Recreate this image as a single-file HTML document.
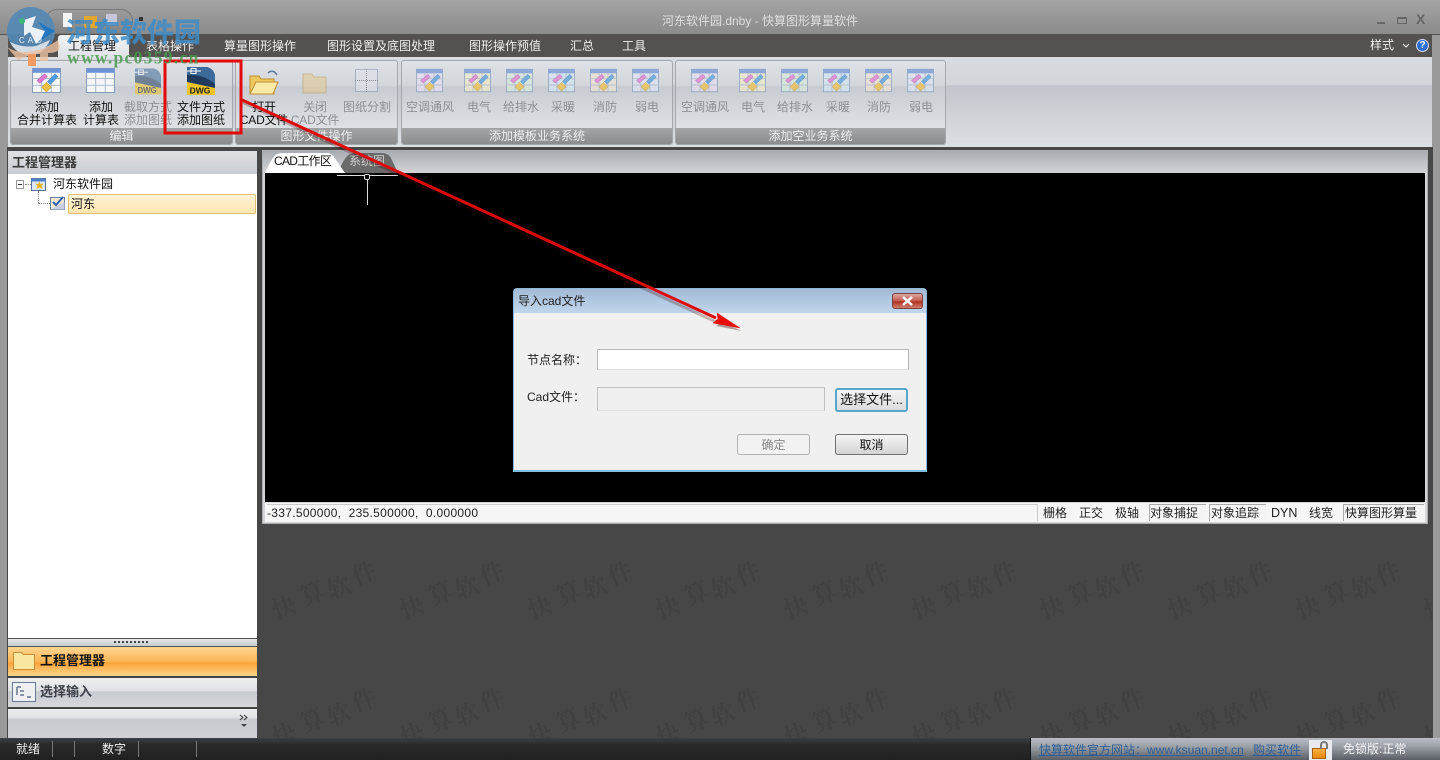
<!DOCTYPE html>
<html lang="zh"><head><meta charset="utf-8"><title>河东软件园.dnby - 快算图形算量软件</title>
<style>
*{box-sizing:border-box}
html,body{margin:0;padding:0;width:1440px;height:760px;overflow:hidden;background:#474747}
body{position:relative;font:12px "Liberation Sans","Noto Sans CJK SC",sans-serif;color:#000}
.a{position:absolute}
.t{position:absolute;white-space:nowrap;line-height:14px}
.c{text-align:center}
.m{position:absolute;top:39px;color:#eee;font-size:12px;line-height:15px;white-space:nowrap}
.g{position:absolute;top:60px;height:85px;border:1px solid #a4a8ad;border-radius:3px;background:linear-gradient(#dfe2e6 0,#d2d5da 30%,#c8ccd2 31%,#dfe3e6 85%,#e6e8ea 100%);overflow:hidden}
.g b{position:absolute;left:0;right:0;bottom:0;height:16px;background:linear-gradient(#a3a5a7,#8a8c8e);color:#eee;font-weight:normal;text-align:center;line-height:16px;font-size:12px}
.lb{position:absolute;font-size:12px;line-height:13px;text-align:center;white-space:nowrap;color:#111}
.d{color:#8d9095}
svg.i{position:absolute;overflow:visible}
.st{position:absolute;top:506px;font-size:12px;line-height:15px;white-space:nowrap;color:#222}
.box{position:absolute;top:504px;height:17px;border-left:1px solid #aaa;border-top:1px solid #aaa;background:#f4f4f4}
</style></head><body>
<svg width="0" height="0" style="position:absolute"><defs>
<symbol id="tb" viewBox="0 0 30 26"><rect x=".5" y=".5" width="29" height="25" fill="#f4f6f8" stroke="#8296b4"/><rect x=".5" y=".5" width="29" height="4.5" fill="#6d93d6"/><path d="M.5 11h29M.5 18h29M10 5v20M20 5v20" stroke="#a9b7c9" fill="none"/></symbol>
<symbol id="tc" viewBox="0 0 30 26"><rect x=".5" y=".5" width="29" height="25" fill="currentColor" stroke="#8296b4"/><rect x=".5" y=".5" width="29" height="4.5" fill="#6d93d6"/><path d="M.5 11h29M.5 18h29M10 5v20M20 5v20" stroke="#a9b7c9" fill="none"/><path d="M5 13l8-7 3 3-8 7z" fill="#e078d0" stroke="#a050a0" stroke-width=".5"/><path d="M16 14l8-8 3 3-8 8z" fill="#4d9be0" stroke="#3070a0" stroke-width=".5"/><path d="M10 20l5-5 5 5-5 5z" fill="#f0c040" stroke="#b08820" stroke-width=".5"/></symbol>
<symbol id="dw" viewBox="0 0 28 28"><path d="M0 0h20q7 2 8 9v19H0z" fill="#1f3a5c"/><path d="M0 8c10-1 20 2 28 9V9q-1-7-8-9H0z" fill="#3d6a98"/><path d="M0 4h14" stroke="#fff"/><rect x="4" y="1.500" width="5" height="5" fill="none" stroke="#fff"/><path d="M0 15l28 6v7H0z" fill="#ecc42a"/><text x="13" y="26.500" text-anchor="middle" font-family="Liberation Sans" font-size="8.500" font-weight="bold" fill="#222">DWG</text></symbol>
<pattern id="wm" x="0" y="0" width="128" height="127" patternUnits="userSpaceOnUse">
<g font-family="Noto Serif CJK SC,serif" font-size="24" font-weight="bold" fill="#414141" text-anchor="middle">
<text x="28" y="108" transform="rotate(-20 28 99)">快</text><text x="56" y="94" transform="rotate(-20 56 85)">算</text><text x="83" y="88" transform="rotate(-20 83 79)">软</text><text x="108" y="74" transform="rotate(-20 108 65)">件</text></g></pattern>
</defs></svg>

<!-- chrome -->
<div class="a" style="left:0;top:0;width:1440px;height:35px;background:linear-gradient(#a4a4a5,#8b8b8b)"></div>
<div class="a" style="left:0;top:34px;width:1440px;height:23px;background:#535251"></div>
<div class="a" style="left:0;top:57px;width:1440px;height:91px;background:linear-gradient(#d9dce0,#d2d5da 30%,#c2c6cc 32%,#d8dbdf 90%,#dfe1e3)"></div>
<div class="a" style="left:0;top:35px;width:8px;height:725px;background:#9a9a9a"></div>
<div class="a" style="left:1432px;top:35px;width:8px;height:725px;background:#9a9a9a"></div>
<div class="a" style="left:7px;top:147px;width:1426px;height:592px;background:#474747"></div>
<svg class="a" style="left:258px;top:526px" width="1174" height="212"><g transform="translate(-258 -526)"><rect x="258" y="526" width="1174" height="212" fill="url(#wm)"/></g></svg>

<div class="t" style="left:662px;top:14px;color:#dedede;font-size:12px">河东软件园.dnby - 快算图形算量软件</div>
<div class="a" style="left:1377px;top:22px;width:8px;height:2px;background:#666"></div>
<div class="a" style="left:1397px;top:17px;width:10px;height:7px;border:1px solid #666;border-top-width:2px"></div>
<div class="t" style="left:1416px;top:12px;font-size:14px;font-weight:bold;color:#666">X</div>

<!-- quick access -->
<div class="a" style="left:45px;top:9px;width:88px;height:25px;border-radius:12px;background:linear-gradient(#9c9c9c,#858585);border:1px solid #777"></div>
<div class="a" style="left:63px;top:13px;width:9px;height:14px;background:#f4f4f4"></div>
<div class="a" style="left:84px;top:16px;width:13px;height:12px;background:#e0a830"></div>
<div class="a" style="left:106px;top:14px;width:11px;height:11px;background:#c6c6d8"></div>
<div class="a" style="left:139px;top:17px;width:4px;height:4px;background:#333"></div>
<!-- tabs -->
<div class="a" style="left:58px;top:35px;width:71px;height:23px;background:linear-gradient(#f0f1f2,#dfe2e6);border-radius:3px 3px 0 0"></div>
<div class="m" style="left:68px;color:#111">工程管理</div>
<div class="m" style="left:146px">表格操作</div>
<div class="m" style="left:224px">算量图形操作</div>
<div class="m" style="left:327px">图形设置及底图处理</div>
<div class="m" style="left:469px">图形操作预值</div>
<div class="m" style="left:570px">汇总</div>
<div class="m" style="left:622px">工具</div>
<div class="t" style="left:1370px;top:38px;color:#eee">样式</div>
<svg class="i" style="left:1402px;top:43px" width="8" height="5"><path d="M1 1l3 3 3-3" stroke="#eee" fill="none"/></svg>
<div class="a" style="left:1416px;top:39px;width:13px;height:13px;border-radius:50%;background:#2d6fd0;border:1px solid #dde;color:#fff;font:bold 10px/11px 'Liberation Sans';text-align:center">?</div>

<!-- ribbon -->
<div class="g" style="left:10px;width:223px"><b>编辑</b></div>
<div class="g" style="left:235px;width:163px"><b>图形文件操作</b></div>
<div class="g" style="left:401px;width:272px"><b>添加模板业务系统</b></div>
<div class="g" style="left:675px;width:271px"><b>添加空业务系统</b></div>

<svg class="i" style="left:32px;top:68px;color:#f4f6f8" width="29" height="25"><use href="#tc"/></svg>
<svg class="i" style="left:86px;top:68px" width="29" height="25"><use href="#tb"/></svg>
<svg class="i" style="left:135px;top:68px;opacity:.55" width="26" height="27"><use href="#dw"/></svg>
<svg class="i" style="left:187px;top:67px" width="28" height="28"><use href="#dw"/></svg>
<div class="lb" style="left:12px;width:70px;top:101px">添加<br>合并计算表</div>
<div class="lb" style="left:76px;width:50px;top:101px">添加<br>计算表</div>
<div class="lb d" style="left:122px;width:52px;top:101px">截取方式<br>添加图纸</div>
<div class="lb" style="left:175px;width:52px;top:101px">文件方式<br>添加图纸</div>

<svg class="i" style="left:248px;top:68px" width="32" height="28"><path d="M2 26V8h9l2 3h13v15z" fill="#f0c860" stroke="#c09030"/><path d="M2 26l6-12h22l-5 12z" fill="#fbe9a8" stroke="#c09030"/><path d="M20 5c3-3 7-2 9 2" stroke="#5a7aa0" stroke-width="1.5" fill="none"/></svg>
<svg class="i" style="left:302px;top:69px;opacity:.45" width="28" height="26"><path d="M1 24V5h9l2 3h12v16z" fill="#e8c880" stroke="#b09040"/></svg>
<svg class="i" style="left:355px;top:69px;opacity:.6" width="23" height="23"><rect x=".5" y=".5" width="22" height="22" fill="#dfe3ea" stroke="#8a9ab0"/><path d="M11.5 0v23M0 11.5h23" stroke="#556" stroke-dasharray="1 1"/></svg>
<div class="lb" style="left:238px;width:52px;top:101px;letter-spacing:-.2px">打开<br>CAD文件</div>
<div class="lb d" style="left:290px;width:50px;top:101px;letter-spacing:-.2px">关闭<br>CAD文件</div>
<div class="lb d" style="left:340px;width:54px;top:101px">图纸分割</div>

<svg class="i" style="left:416px;top:68px;opacity:.7;color:#e6dff2" width="27" height="25"><use href="#tc"/></svg>
<svg class="i" style="left:464px;top:68px;opacity:.7;color:#f0eccc" width="27" height="25"><use href="#tc"/></svg>
<svg class="i" style="left:506px;top:68px;opacity:.7;color:#d8ecdc" width="27" height="25"><use href="#tc"/></svg>
<svg class="i" style="left:548px;top:68px;opacity:.7;color:#d4e8f4" width="27" height="25"><use href="#tc"/></svg>
<svg class="i" style="left:590px;top:68px;opacity:.7;color:#f0e4d4" width="27" height="25"><use href="#tc"/></svg>
<svg class="i" style="left:632px;top:68px;opacity:.7;color:#dfe4f4" width="27" height="25"><use href="#tc"/></svg>
<div class="lb d" style="left:405px;width:50px;top:101px">空调通风</div>
<div class="lb d" style="left:459px;width:40px;top:101px">电气</div>
<div class="lb d" style="left:500px;width:42px;top:101px">给排水</div>
<div class="lb d" style="left:542px;width:42px;top:101px">采暖</div>
<div class="lb d" style="left:584px;width:42px;top:101px">消防</div>
<div class="lb d" style="left:626px;width:42px;top:101px">弱电</div>

<svg class="i" style="left:691px;top:68px;opacity:.7;color:#e6dff2" width="27" height="25"><use href="#tc"/></svg>
<svg class="i" style="left:739px;top:68px;opacity:.7;color:#f0eccc" width="27" height="25"><use href="#tc"/></svg>
<svg class="i" style="left:781px;top:68px;opacity:.7;color:#d8ecdc" width="27" height="25"><use href="#tc"/></svg>
<svg class="i" style="left:823px;top:68px;opacity:.7;color:#d4e8f4" width="27" height="25"><use href="#tc"/></svg>
<svg class="i" style="left:865px;top:68px;opacity:.7;color:#f0e4d4" width="27" height="25"><use href="#tc"/></svg>
<svg class="i" style="left:907px;top:68px;opacity:.7;color:#dfe4f4" width="27" height="25"><use href="#tc"/></svg>
<div class="lb d" style="left:680px;width:50px;top:101px">空调通风</div>
<div class="lb d" style="left:733px;width:40px;top:101px">电气</div>
<div class="lb d" style="left:774px;width:42px;top:101px">给排水</div>
<div class="lb d" style="left:817px;width:42px;top:101px">采暖</div>
<div class="lb d" style="left:858px;width:42px;top:101px">消防</div>
<div class="lb d" style="left:900px;width:42px;top:101px">弱电</div>

<!-- left panel -->
<div class="a" style="left:8px;top:151px;width:249px;height:587px;background:#fff"></div>
<div class="a" style="left:8px;top:151px;width:249px;height:23px;background:linear-gradient(#dfe1e4,#c9ccd1)"></div>
<div class="t" style="left:12px;top:156px;font-weight:bold;font-size:13px;color:#3a3a3a">工程管理器</div>
<div class="a" style="left:16px;top:180px;width:8px;height:9px;border:1px solid #999;background:#fff"></div>
<div class="a" style="left:18px;top:184px;width:4px;height:1px;background:#333"></div>
<div class="a" style="left:25px;top:184px;width:6px;border-top:1px dotted #888"></div>
<svg class="i" style="left:31px;top:178px" width="15" height="13"><rect x=".5" y=".5" width="14" height="12" fill="#dce8f6" stroke="#5a7098"/><rect x=".5" y=".5" width="14" height="3" fill="#4d80c8"/><path d="M8 3l1.500 3 3-.5-2 2.500 1 3-3-1.500-3 1.500 1-3-2-2.500 3 .5z" fill="#e8b020"/></svg>
<div class="t" style="left:53px;top:177px;color:#111">河东软件园</div>
<div class="a" style="left:38px;top:191px;height:12px;border-left:1px dotted #888"></div>
<div class="a" style="left:38px;top:203px;width:12px;border-top:1px dotted #888"></div>
<svg class="i" style="left:50px;top:196px" width="15" height="14"><rect x=".5" y="1.500" width="14" height="12" fill="#f2ead0" stroke="#6a7fa0"/><path d="M.5 13.500L14.500 6v7.500z" fill="#c8cfe4"/><path d="M3 6l3 3 7-8" stroke="#3060b0" stroke-width="2" fill="none"/></svg>
<div class="a" style="left:68px;top:194px;width:188px;height:20px;background:linear-gradient(#fff4d8,#fde6b0);border:1px solid #e0c070;border-radius:2px"></div>
<div class="t" style="left:71px;top:197px;color:#111">河东</div>

<div class="a" style="left:8px;top:638px;width:249px;height:9px;background:linear-gradient(#e6e8eb,#c8cbd0);border-top:1px solid #555;border-bottom:1px solid #555"></div>
<div class="a" style="left:114px;top:641px;width:34px;border-top:2px dotted #444"></div>
<div class="a" style="left:8px;top:647px;width:249px;height:29px;background:linear-gradient(#fed692,#fdb655 50%,#fba43a 55%,#fed68a)"></div>
<svg class="i" style="left:13px;top:651px" width="22" height="19"><path d="M.5 18.500V1.500h8l1.500 2h11.500v15z" fill="#fbe8a0" stroke="#c89038"/></svg>
<div class="t" style="left:40px;top:654px;font-weight:bold;font-size:13px;color:#111">工程管理器</div>
<div class="a" style="left:8px;top:676px;width:249px;height:2px;background:#444"></div>
<div class="a" style="left:8px;top:678px;width:249px;height:29px;background:linear-gradient(#eff0f2,#dfe1e4 45%,#c7cad0 47%,#d6d8dc)"></div>
<svg class="i" style="left:12px;top:682px" width="24" height="20"><rect x=".5" y=".5" width="23" height="19" fill="#eef0f4" stroke="#6a7a90"/><path d="M5 5h4M8 9h4M8 13h4M15 15h4M5 5v8" stroke="#8a94a4" stroke-width="2" fill="none"/></svg>
<div class="t" style="left:40px;top:685px;font-weight:bold;font-size:13px;color:#3c4048">选择输入</div>
<div class="a" style="left:8px;top:707px;width:249px;height:2px;background:#444"></div>
<div class="a" style="left:8px;top:709px;width:249px;height:29px;background:linear-gradient(#eceef0,#dfe1e4 30%,#c7cad0 35%,#cfd1d5)"></div>
<svg class="i" style="left:239px;top:714px" width="10" height="14"><path d="M1 1l3 2.500-3 2.500M5 1l3 2.500-3 2.500" stroke="#333" fill="none"/><path d="M2 10h6l-3 3z" fill="#444"/></svg>

<!-- work area -->
<div class="a" style="left:262px;top:150px;width:1166px;height:374px;background:linear-gradient(#a8abb0 0,#d3d5d8 22px);border:1px solid #b0b0b0"></div>
<svg class="a" style="left:262px;top:151px" width="150" height="24"><path d="M76 22Q82 6 88 3Q91 2 94 2h26q6 0 9 5l7 15z" fill="#6a6a6a"/><path d="M3 22Q10 6 15 3Q18 2 22 2h44q3 0 6 4l11 16z" fill="#fff"/></svg>
<div class="t" style="left:274px;top:154px;color:#111;letter-spacing:-.7px">CAD工作区</div>
<div class="t" style="left:349px;top:154px;color:#d0d0d0">系统图</div>
<div class="a" style="left:265px;top:173px;width:1160px;height:329px;background:#000"></div>
<div class="a" style="left:337px;top:175px;width:61px;height:1px;background:#ddd"></div>
<div class="a" style="left:367px;top:176px;width:1px;height:29px;background:#ddd"></div>
<div class="a" style="left:364px;top:174px;width:6px;height:6px;border:1px solid #ddd;background:#000;border-radius:2px"></div>
<div class="a" style="left:265px;top:503px;width:1160px;height:19px;background:#f6f6f6"></div>
<div class="t" style="left:267px;top:506px;color:#222;font-size:12px;letter-spacing:.3px">-337.500000,&nbsp; 235.500000,&nbsp; 0.000000</div>
<div class="a" style="left:267px;top:504px;width:770px;height:1px;background:#ccc"></div>
<div class="a" style="left:1037px;top:504px;width:1px;height:17px;background:#ccc"></div>
<div class="st" style="left:1043px">栅格</div>
<div class="st" style="left:1079px">正交</div>
<div class="st" style="left:1115px">极轴</div>
<div class="box" style="left:1149px;width:57px"></div><div class="st" style="left:1150px">对象捕捉</div>
<div class="box" style="left:1209px;width:57px"></div><div class="st" style="left:1211px">对象追踪</div>
<div class="st" style="left:1271px;font-size:12.500px">DYN</div>
<div class="st" style="left:1309px">线宽</div>
<div class="box" style="left:1343px;width:81px"></div><div class="st" style="left:1345px">快算图形算量</div>

<!-- status bar -->
<div class="a" style="left:0;top:738px;width:1440px;height:22px;background:linear-gradient(#3b4048,#2a2a2a 30%,#202020)"></div>
<div class="t" style="left:16px;top:742px;color:#eee">就绪</div>
<div class="t" style="left:102px;top:742px;color:#eee">数字</div>
<div class="a" style="left:52px;top:741px;width:1px;height:16px;background:#777"></div>
<div class="a" style="left:74px;top:741px;width:1px;height:16px;background:#777"></div>
<div class="a" style="left:138px;top:741px;width:1px;height:16px;background:#777"></div>
<div class="a" style="left:196px;top:741px;width:1px;height:16px;background:#777"></div>
<div class="a" style="left:1030px;top:738px;width:410px;height:22px;background:linear-gradient(#b9bdc3,#9fa4ab 35%,#5a5f66);border-left:1px solid #111"></div>
<div class="t" style="left:1039px;top:743px;color:#2f5f96;text-decoration:underline">快算软件官方网站：www.ksuan.net.cn</div>
<div class="t" style="left:1253px;top:743px;color:#2f5f96;text-decoration:underline">购买软件</div>
<div class="a" style="left:1309px;top:740px;width:23px;height:20px;background:#e8eaee"></div>
<div class="a" style="left:1312px;top:748px;width:14px;height:11px;background:linear-gradient(#f8b040,#e88a10);border:1px solid #a86010"></div>
<div class="a" style="left:1320px;top:741px;width:8px;height:8px;border:2px solid #777;border-bottom:0;border-radius:4px 4px 0 0"></div>
<div class="t" style="left:1343px;top:742px;color:#f4f4f4">免锁版:正常</div>

<!-- dialog -->
<div class="a" style="left:513px;top:288px;width:414px;height:184px;background:#f0f0f0;border:1px solid #8fb8d6;border-bottom:2px solid #7fc0e0;border-radius:4px 4px 0 0;overflow:hidden">
<div style="height:24px;background:linear-gradient(#a2bad6,#c0d6ec)"></div></div>
<div class="t" style="left:518px;top:294px;color:#222">导入cad文件</div>
<div class="a" style="left:892px;top:293px;width:31px;height:16px;border:1px solid #7a4040;border-radius:3px;background:linear-gradient(#dca8a0,#c45a4e 50%,#b03020 55%,#d08070)"></div>
<svg class="i" style="left:901px;top:296px" width="13" height="10"><path d="M2 1l9 8M11 1l-9 8" stroke="#fff" stroke-width="2.500"/></svg>
<div class="t" style="left:527px;top:353px;color:#222">节点名称：</div>
<div class="a" style="left:597px;top:349px;width:312px;height:21px;background:#fff;border:1px solid #b8b8b8;border-bottom-color:#e2e2e2"></div>
<div class="t" style="left:527px;top:390px;color:#222">Cad文件：</div>
<div class="a" style="left:597px;top:387px;width:228px;height:24px;background:#efefef;border:1px solid #c0c0c0;border-bottom-color:#e0e0e0"></div>
<div class="a c" style="left:835px;top:388px;width:73px;height:24px;border:2px solid #55a6c8;border-radius:3px;background:linear-gradient(#f4f4f4,#dcdcdc);line-height:20px;color:#111;font-size:13px;white-space:nowrap">选择文件...</div>
<div class="a c" style="left:737px;top:434px;width:73px;height:21px;border:1px solid #b0b0b0;border-radius:3px;background:#f2f2f2;line-height:20px;color:#888">确定</div>
<div class="a c" style="left:835px;top:434px;width:73px;height:21px;border:1px solid #707070;border-radius:3px;background:linear-gradient(#f4f4f4,#d4d4d4);line-height:20px;color:#111">取消</div>

<!-- annotations -->
<svg class="a" style="left:0;top:0;pointer-events:none" width="1440" height="760">
<path d="M242 102L716 322" stroke="#3a0000" stroke-opacity=".25" stroke-width="3" fill="none"/>
<path d="M742 331L716 326L722 322z" fill="#3a0000" fill-opacity=".35"/>
<path d="M240 99L716 318" stroke="#dd0a0a" stroke-width="3" fill="none"/>
<path d="M740 328L717 313L718 319L713 323z" fill="#e80a0a" stroke="#d00" stroke-width=".5"/>
<rect x="165" y="61" width="76" height="72" fill="none" stroke="#e20a0a" stroke-width="3"/>
<!-- logo watermark -->
<circle cx="31" cy="31" r="24" fill="#5588b4" fill-opacity=".92"/>
<path d="M10 42Q22 48 36 46L50 40Q44 54 31 55Q16 55 10 42z" fill="#dfe6ec" fill-opacity=".9"/>
<path d="M24 20L36 16L32 27L48 32L36 44L30 32L24 36z" fill="#f4f7fa" fill-opacity=".95"/>
<path d="M38 22L55 31L40 41L45 31z" fill="#2277c0"/>
<circle cx="22" cy="21" r="3" fill="#3cb878"/>
<text x="19" y="43" font-family="Liberation Sans" font-size="8" fill="#e6edf4" letter-spacing="3">CAD</text>
<path d="M7 47C20 56 42 52 58 40L60 48Q58 53 48 53L48 61L40 61L40 54L36 54L36 66L28 66L28 56L18 60z" fill="#eec0a0" fill-opacity=".8"/>
<path d="M28 54h8v12h-8z" fill="#f09050" fill-opacity=".8"/>
<text x="66" y="42" font-family="Noto Sans CJK SC,sans-serif" font-size="27" font-weight="900" fill="#3f8cc8" fill-opacity=".85">河东软件园</text>
<text x="67" y="63.500" font-family="Liberation Serif,serif" font-size="17.500" font-weight="bold" fill="#4a9a50" fill-opacity=".85" letter-spacing="1.300">www.pc0359.cn</text>
</svg>
</body></html>
